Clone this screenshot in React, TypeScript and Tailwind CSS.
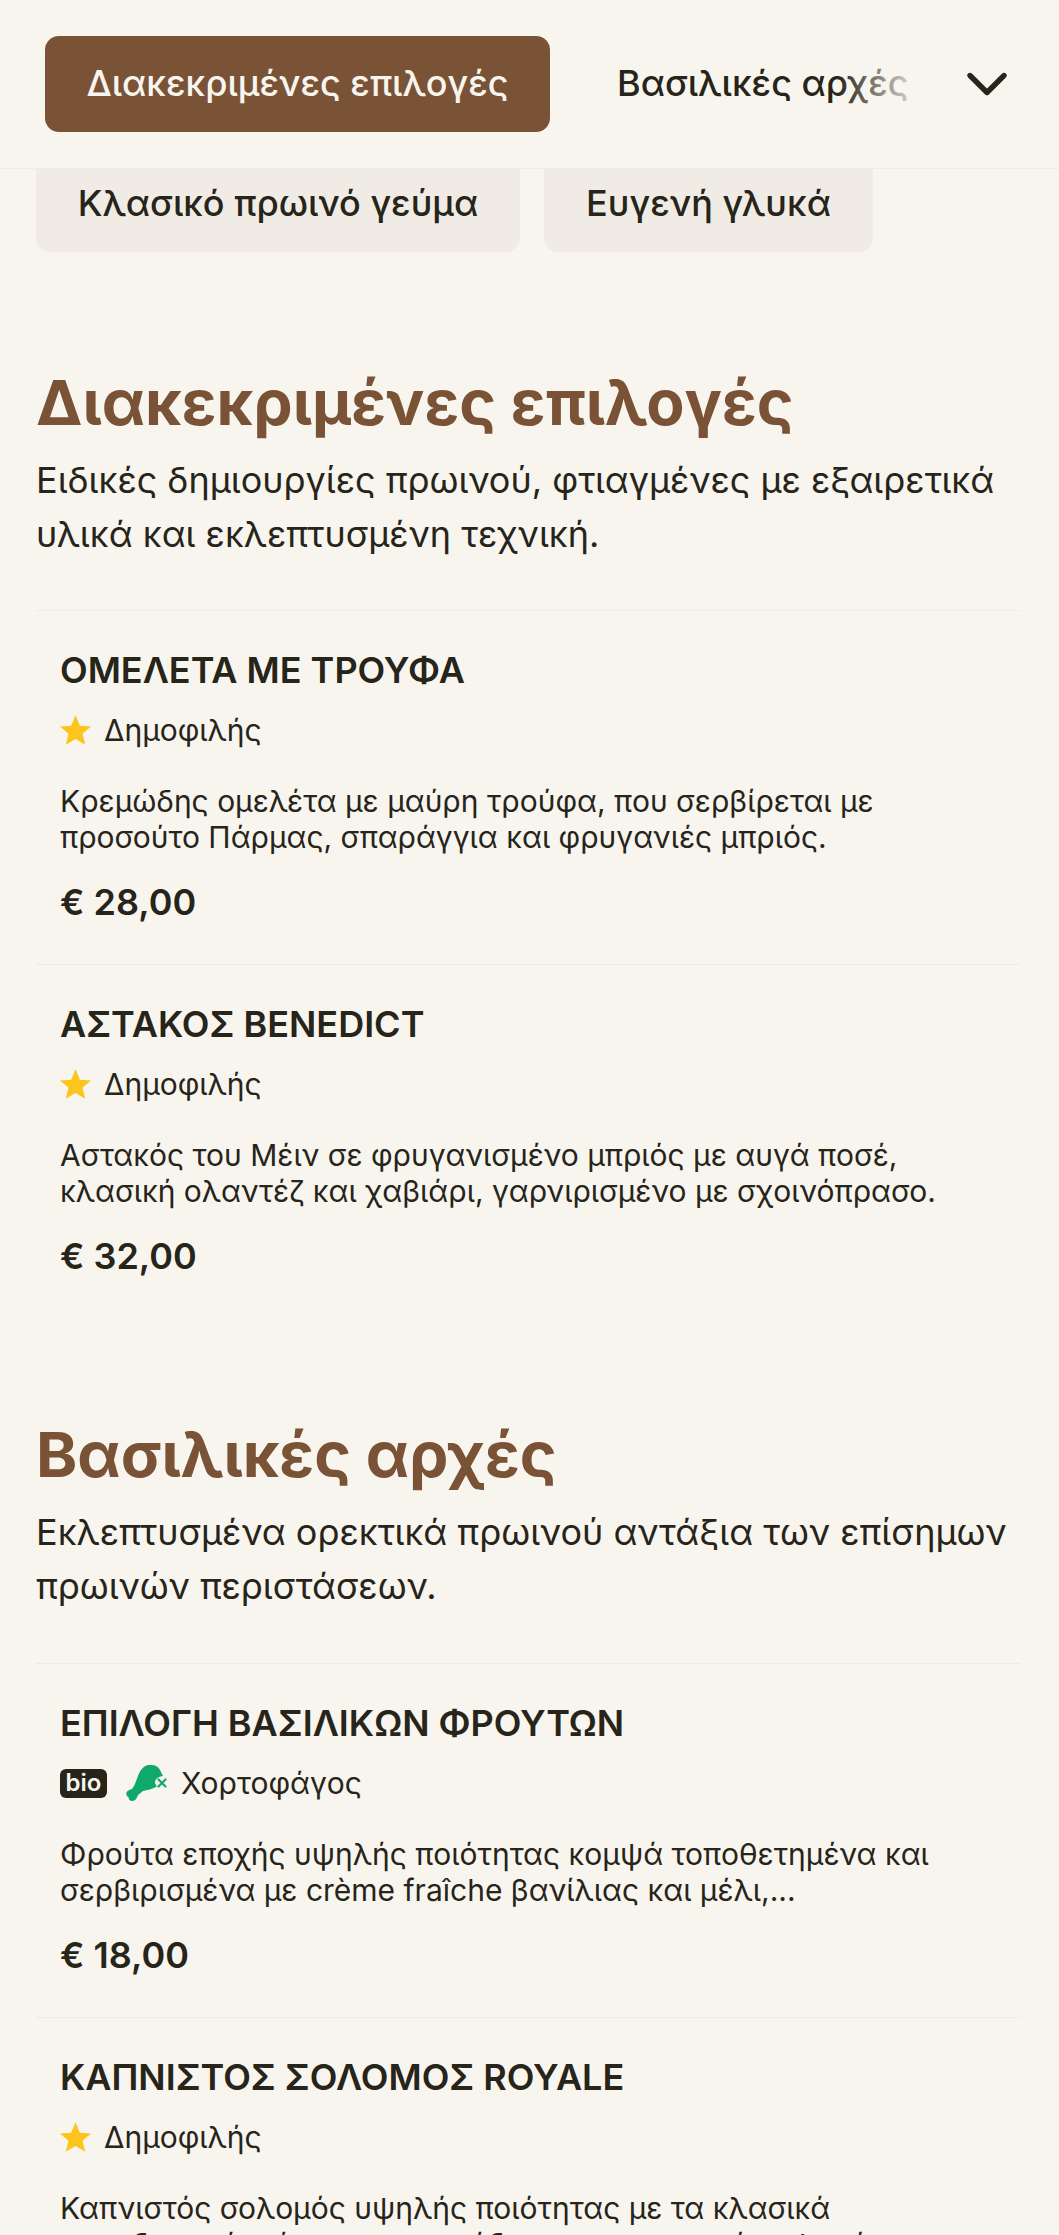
import React from "react";
import { ChevronDown } from "lucide-react";

type Item = {
  title: string;
  tag: "popular" | "veg";
  desc: string[];
  price: string;
};

const sections: { title: string; intro: string[]; items: Item[] }[] = [
  {
    title: "Διακεκριμένες επιλογές",
    intro: [
      "Ειδικές δημιουργίες πρωινού, φτιαγμένες με εξαιρετικά",
      "υλικά και εκλεπτυσμένη τεχνική.",
    ],
    items: [
      {
        title: "ΟΜΕΛΕΤΑ ΜΕ ΤΡΟΥΦΑ",
        tag: "popular",
        desc: [
          "Κρεμώδης ομελέτα με μαύρη τρούφα, που σερβίρεται με",
          "προσούτο Πάρμας, σπαράγγια και φρυγανιές μπριός.",
        ],
        price: "€ 28,00",
      },
      {
        title: "ΑΣΤΑΚΟΣ BENEDICT",
        tag: "popular",
        desc: [
          "Αστακός του Μέιν σε φρυγανισμένο μπριός με αυγά ποσέ,",
          "κλασική ολαντέζ και χαβιάρι, γαρνιρισμένο με σχοινόπρασο.",
        ],
        price: "€ 32,00",
      },
    ],
  },
  {
    title: "Βασιλικές αρχές",
    intro: [
      "Εκλεπτυσμένα ορεκτικά πρωινού αντάξια των επίσημων",
      "πρωινών περιστάσεων.",
    ],
    items: [
      {
        title: "ΕΠΙΛΟΓΗ ΒΑΣΙΛΙΚΩΝ ΦΡΟΥΤΩΝ",
        tag: "veg",
        desc: [
          "Φρούτα εποχής υψηλής ποιότητας κομψά τοποθετημένα και",
          "σερβιρισμένα με crème fraîche βανίλιας και μέλι,...",
        ],
        price: "€ 18,00",
      },
      {
        title: "ΚΑΠΝΙΣΤΟΣ ΣΟΛΟΜΟΣ ROYALE",
        tag: "popular",
        desc: [
          "Καπνιστός σολομός υψηλής ποιότητας με τα κλασικά",
          "συνοδευτικά, κάπαρη, κρεμμύδι και φρυγανισμένο ψωμί,...",
        ],
        price: "€ 26,00",
      },
    ],
  },
];

const Star = () => (
  <svg viewBox="1 1.500 22 21" className="w-[31px] h-[30px] shrink-0 fill-[#fcc51e]">
    <path d="M12 1.500l3.100 7.400 8 .6-6.100 5.200 1.900 7.800L12 18.300 5.100 22.500 7 14.700.9 9.500l8-.6z" />
  </svg>
);

const NoMeat = () => (
  <svg viewBox="0 0 42 36" className="w-[42px] h-[36px] shrink-0 fill-[#10a96c]">
    <path d="M23 0C28-.5 32 1 34 5l3 6c-4 .5-8 3-8 6 0 2 1 3 2 4.500-5 3-10 3.500-14 4.500l-5 4c-1 3-3 6-5.500 6-2.500 0-4-1.500-4-4-2-.5-2.500-3-2-4.500C1.500 25 4 25 6 24c3-4 4-8 6-13C14 5 18 .5 23 0z" />
    <path
      d="M32.500 14.500l7 7M39.500 14.500l-7 7"
      stroke="#10a96c"
      strokeWidth="2.200"
      strokeLinecap="round"
      fill="none"
    />
  </svg>
);

const MenuItem = ({ item }: { item: Item }) => (
  <div className="border-t border-[#efebe4] px-[24px] pt-[37px] h-[354px]">
    <h3 className="text-[36px] leading-[44px] font-semibold text-[#27241a]">{item.title}</h3>
    {item.tag === "popular" ? (
      <div className="flex items-center gap-[13px] mt-[16px] h-[44px]">
        <Star />
        <span className="text-[30px] text-[#27241a]">Δημοφιλής</span>
      </div>
    ) : (
      <div className="flex items-center mt-[16px] h-[44px]">
        <span className="flex items-center justify-center h-[29px] w-[47px] bg-[#27241a] text-[#f8f5ef] rounded-[6px] text-[24px] font-semibold">
          bio
        </span>
        <span className="ml-[19px]">
          <NoMeat />
        </span>
        <span className="ml-[13px] text-[30px] text-[#27241a]">Χορτοφάγος</span>
      </div>
    )}
    <p className="mt-[31px] text-[30px] leading-[36px] text-[#27241a]">
      {item.desc.map((line) => (
        <span key={line} className="block whitespace-nowrap">
          {line}
        </span>
      ))}
    </p>
    <p className="mt-[25px] text-[36px] leading-[44px] font-semibold text-[#27241a]">{item.price}</p>
  </div>
);

export default function App() {
  return (
    <div className="h-[2235px] overflow-hidden bg-[#f8f5ef] font-['Inter',sans-serif]">
      {/* Sticky tabs */}
      <header className="relative z-10 h-[169px] bg-[#f8f5ef] border-b border-[#f0ece5] flex items-center pl-[45px] pr-[38px]">
        <div className="relative flex-1 flex items-center gap-[67px] overflow-hidden">
          <button className="shrink-0 h-[96px] w-[505px] pb-[2px] rounded-[14px] bg-[#7a5337] text-[#f8f5ef] text-[36px] font-medium">
            Διακεκριμένες επιλογές
          </button>
          <span className="shrink-0 pb-[2px] text-[36px] font-medium text-[#27241a]">Βασιλικές αρχές</span>
          <div className="absolute right-0 inset-y-0 w-[90px] bg-gradient-to-r from-transparent to-[#f8f5ef]" />
        </div>
        <ChevronDown className="shrink-0 ml-[26px] w-[68px] h-[68px] text-[#27241a]" strokeWidth={1.9} />
      </header>

      {/* Category chips */}
      <div className="flex gap-[24px] px-[36px] -mt-[13px]">
        <div className="h-[96px] w-[484px] pb-[2px] flex items-center justify-center rounded-[14px] bg-[#f0ece5] text-[36px] font-medium text-[#27241a]">
          Κλασικό πρωινό γεύμα
        </div>
        <div className="h-[96px] w-[329px] pb-[2px] flex items-center justify-center rounded-[14px] bg-[#f0ece5] text-[36px] font-medium text-[#27241a]">
          Ευγενή γλυκά
        </div>
      </div>

      <main className="pl-[36px] pr-[38px] pt-[110px]">
        {sections.map((section, i) => (
          <section key={section.title} className={i > 0 ? "mt-[96px]" : ""}>
            <h2 className="text-[62.500px] leading-[80px] font-bold text-[#7a5337]">{section.title}</h2>
            <p className="mt-[11px] text-[36px] leading-[54px] text-[#27241a]">
              {section.intro.map((line) => (
                <span key={line} className="block whitespace-nowrap">
                  {line}
                </span>
              ))}
            </p>
            <div className={i > 0 ? "mt-[50px]" : "mt-[49px]"}>
              {section.items.map((item) => (
                <MenuItem key={item.title} item={item} />
              ))}
            </div>
          </section>
        ))}
      </main>
    </div>
  );
}
